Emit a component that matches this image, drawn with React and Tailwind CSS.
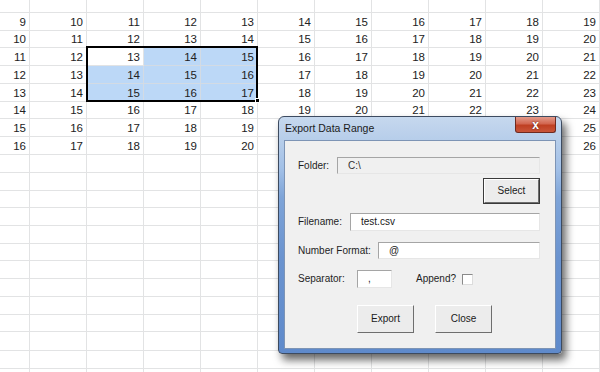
import React from 'react';

const rowHeights = [
  'h-[13px]', 'h-[18px]', 'h-[17px]', 'h-[18px]', 'h-[18px]', 'h-[18px]', 'h-[17px]',
  'h-[18px]', 'h-[18px]', 'h-[18px]', 'h-[18px]', 'h-[17px]', 'h-[18px]', 'h-[18px]',
  'h-[17px]', 'h-[18px]', 'h-[18px]', 'h-[18px]', 'h-[17px]', 'h-[19px]', 'h-[18px]', 'h-[18px]',
];

const colWidths = ['w-[30px]', 'w-[57px]', 'w-[57px]', 'w-[57px]', 'w-[57px]', 'w-[57px]', 'w-[57px]', 'w-[57px]', 'w-[57px]', 'w-[57px]', 'w-[57px]'];

// data rows start at row index 1; cells hidden behind the dialog stay empty
const cellValue = (r, c) => {
  const d = r - 1;
  if (d < 0 || d > 7) return '';
  if (d >= 6 && c >= 5 && c <= 9) return '';
  return 9 + d + c;
};

const isSelected = (r, c) => r >= 3 && r <= 5 && c >= 2 && c <= 4;
const isActive = (r, c) => r === 3 && c === 2;

const Sheet = () => (
  <div className="flex flex-col">
    {rowHeights.map((h, r) => (
      <div key={r} className={`flex shrink-0 ${h}`}>
        {colWidths.map((w, c) => {
          const sel = isSelected(r, c) && !isActive(r, c);
          return (
            <div
              key={c}
              className={`${w} h-full shrink-0 border-r border-b flex items-end justify-end pr-[3px] pb-[2px] leading-none ${
                sel ? 'bg-[#bcd8f7] border-[#d3dbe4]' : 'bg-white border-[#e2e3e4]'
              }`}
            >
              {cellValue(r, c)}
            </div>
          );
        })}
      </div>
    ))}
  </div>
);

const TextBox = ({ value, disabled, className = '' }) => (
  <div
    className={`h-full flex items-center pl-[10px] border border-t-[#a5a5a5] border-l-[#a5a5a5] border-r-[#e6e6e6] border-b-[#e6e6e6] ${
      disabled ? 'bg-[#f0f0f0] text-[#303030]' : 'bg-white text-[#1a1a1a]'
    } ${className}`}
  >
    {value}
  </div>
);

const Button = ({ children, isDefault }) => (
  <div className={`w-[57px] h-full ${isDefault ? 'border border-[#3a3a3a]' : ''}`}>
    <div className="w-full h-full flex items-center justify-center bg-[#ececec] border border-t-white border-l-white border-r-[#6e6e6e] border-b-[#6e6e6e] text-[#1a1a1a]">
      {children}
    </div>
  </div>
);

const ExportDialog = () => (
  <div className="absolute left-[278px] top-[116px] w-[284px] h-[238px] rounded-t-[6px] rounded-b-[4px] border border-[#3d4b60] bg-[linear-gradient(180deg,#c6d8ee_0%,#b3cbe9_12%,#a2c0e7_22%,#7ea4d8_34%,#6a93cf_60%,#5f8acb_100%)] shadow-[4px_6px_9px_rgba(0,0,0,0.6)] flex flex-col">
    <div className="h-[23px] flex items-start justify-between pl-[6px] pr-[5px] shrink-0">
      <span className="mt-[6px] text-[10.5px] leading-none text-[#1b1b1b]">Export Data Range</span>
      <div className="w-[41px] h-[16px] rounded-b-[3px] border border-t-0 border-[#6e2a20] bg-[linear-gradient(180deg,#e39a8a_0%,#d26650_45%,#bf3f22_55%,#c9553a_100%)] flex items-center justify-center">
        <span className="text-white font-bold text-[12px] leading-none [text-shadow:0_0_2px_#4a1a12]">x</span>
      </div>
    </div>
    <div className="mx-[5px] mb-[4px] flex-1 border border-[#7d94b5] bg-[#f0f0f0] pt-[16px] pl-[13px] pr-[15px] text-[10px] text-[#1e1e1e] leading-none">
      <div className="flex items-center h-[17px]">
        <span className="w-[39px] shrink-0">Folder:</span>
        <TextBox value="C:\" disabled className="flex-1" />
      </div>
      <div className="flex justify-end mt-[4px] h-[26px]">
        <Button isDefault>Select</Button>
      </div>
      <div className="flex items-center h-[18px] mt-[9px]">
        <span className="w-[52px] shrink-0">Filename:</span>
        <TextBox value="test.csv" className="flex-1" />
      </div>
      <div className="flex items-center h-[17px] mt-[11px]">
        <span className="w-[80px] shrink-0">Number Format:</span>
        <TextBox value="@" className="flex-1" />
      </div>
      <div className="flex items-center h-[18px] mt-[11px]">
        <span className="w-[59px] shrink-0">Separator:</span>
        <TextBox value="," className="w-[35px] shrink-0" />
        <span className="ml-[24px] w-[46px] shrink-0">Append?</span>
        <div className="w-[11px] h-[11px] bg-white border border-t-[#8a8a8a] border-l-[#8a8a8a] border-r-[#dcdcdc] border-b-[#dcdcdc]" />
      </div>
      <div className="flex h-[28px] mt-[17px] pl-[59px] gap-[21px]">
        <Button>Export</Button>
        <Button>Close</Button>
      </div>
    </div>
  </div>
);

const App = () => {
  return (
    <div className="relative w-[600px] h-[372px] overflow-hidden bg-white text-[11.5px] text-[#222] font-['Liberation_Sans',Arial,sans-serif]">
      <Sheet />

      {/* selection outline + fill handle */}
      <div className="absolute left-[86px] top-[46px] w-[172px] h-[56px] border-2 border-black" />
      <div className="absolute left-[255px] top-[98px] w-[5px] h-[5px] bg-black border border-white" />

      <ExportDialog />
    </div>
  );
};

export default App;
